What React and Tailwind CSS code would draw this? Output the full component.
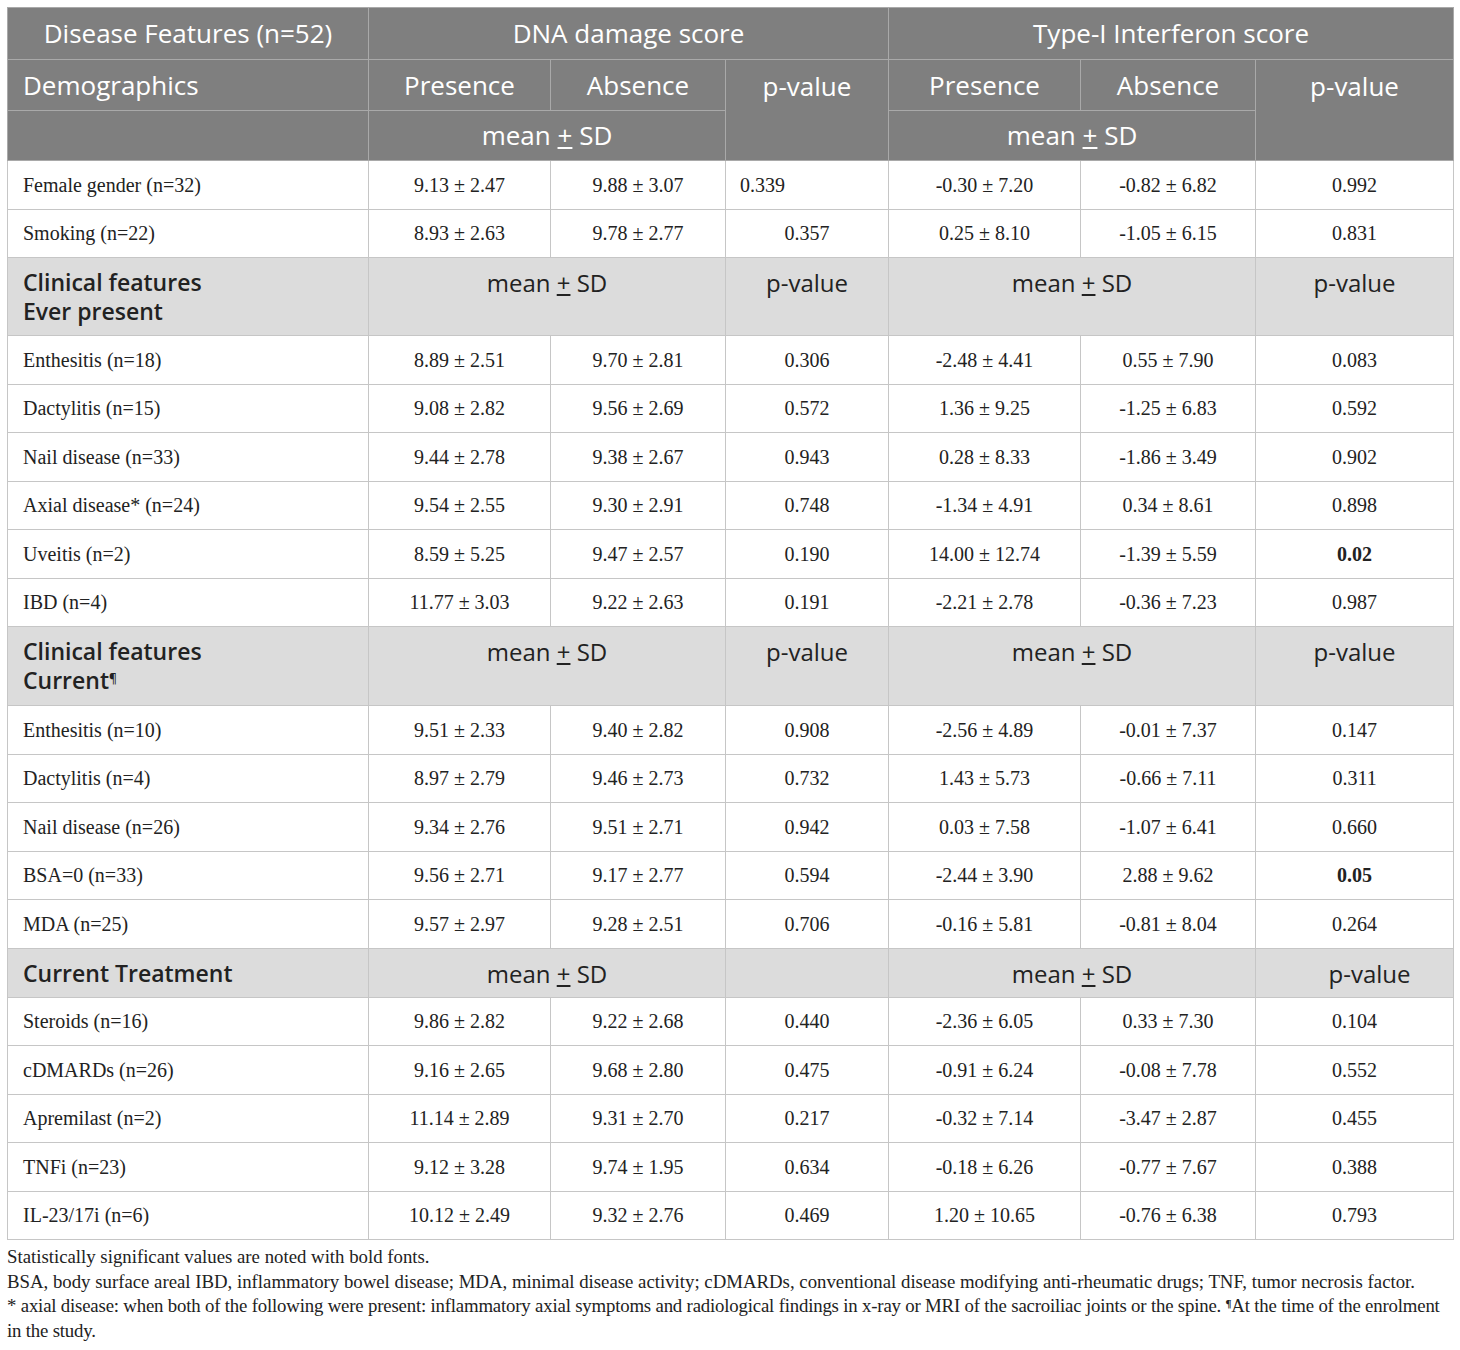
const dataA = [
  ["Female gender (n=32)", "9.13 ± 2.47", "9.88 ± 3.07", "0.339", "-0.30 ± 7.20", "-0.82 ± 6.82", "0.992", "left"],
  ["Smoking (n=22)", "8.93 ± 2.63", "9.78 ± 2.77", "0.357", "0.25 ± 8.10", "-1.05 ± 6.15", "0.831"],
];

const dataB = [
  ["Enthesitis (n=18)", "8.89 ± 2.51", "9.70 ± 2.81", "0.306", "-2.48 ± 4.41", "0.55 ± 7.90", "0.083"],
  ["Dactylitis (n=15)", "9.08 ± 2.82", "9.56 ± 2.69", "0.572", "1.36 ± 9.25", "-1.25 ± 6.83", "0.592"],
  ["Nail disease (n=33)", "9.44 ± 2.78", "9.38 ± 2.67", "0.943", "0.28 ± 8.33", "-1.86 ± 3.49", "0.902"],
  ["Axial disease* (n=24)", "9.54 ± 2.55", "9.30 ± 2.91", "0.748", "-1.34 ± 4.91", "0.34 ± 8.61", "0.898"],
  ["Uveitis (n=2)", "8.59 ± 5.25", "9.47 ± 2.57", "0.190", "14.00 ± 12.74", "-1.39 ± 5.59", "0.02", "bold"],
  ["IBD (n=4)", "11.77 ± 3.03", "9.22 ± 2.63", "0.191", "-2.21 ± 2.78", "-0.36 ± 7.23", "0.987"],
];

const dataC = [
  ["Enthesitis (n=10)", "9.51 ± 2.33", "9.40 ± 2.82", "0.908", "-2.56 ± 4.89", "-0.01 ± 7.37", "0.147"],
  ["Dactylitis (n=4)", "8.97 ± 2.79", "9.46 ± 2.73", "0.732", "1.43 ± 5.73", "-0.66 ± 7.11", "0.311"],
  ["Nail disease (n=26)", "9.34 ± 2.76", "9.51 ± 2.71", "0.942", "0.03 ± 7.58", "-1.07 ± 6.41", "0.660"],
  ["BSA=0 (n=33)", "9.56 ± 2.71", "9.17 ± 2.77", "0.594", "-2.44 ± 3.90", "2.88 ± 9.62", "0.05", "bold"],
  ["MDA (n=25)", "9.57 ± 2.97", "9.28 ± 2.51", "0.706", "-0.16 ± 5.81", "-0.81 ± 8.04", "0.264"],
];

const dataD = [
  ["Steroids (n=16)", "9.86 ± 2.82", "9.22 ± 2.68", "0.440", "-2.36 ± 6.05", "0.33 ± 7.30", "0.104"],
  ["cDMARDs (n=26)", "9.16 ± 2.65", "9.68 ± 2.80", "0.475", "-0.91 ± 6.24", "-0.08 ± 7.78", "0.552"],
  ["Apremilast (n=2)", "11.14 ± 2.89", "9.31 ± 2.70", "0.217", "-0.32 ± 7.14", "-3.47 ± 2.87", "0.455"],
  ["TNFi (n=23)", "9.12 ± 3.28", "9.74 ± 1.95", "0.634", "-0.18 ± 6.26", "-0.77 ± 7.67", "0.388"],
  ["IL-23/17i (n=6)", "10.12 ± 2.49", "9.32 ± 2.76", "0.469", "1.20 ± 10.65", "-0.76 ± 6.38", "0.793"],
];

const sans = "font-['Open_Sans',sans-serif]";
const hd = "border border-[#a9a9a9] text-white font-normal text-[26px]";
const td = "border border-[#c6c6c6] text-center align-middle";

function MeanSD() {
  return (
    <>
      mean <span className="underline underline-offset-2">+</span> SD
    </>
  );
}

function DataRows({ rows }) {
  return rows.map((r) => (
    <tr key={r[0]} className="h-[48.5px]">
      <td className="border border-[#c6c6c6] pl-[15px] text-left align-middle">{r[0]}</td>
      <td className={td}>{r[1]}</td>
      <td className={td}>{r[2]}</td>
      <td className={r[7] === "left" ? "border border-[#c6c6c6] pl-[14px] text-left align-middle" : td}>{r[3]}</td>
      <td className={td}>{r[4]}</td>
      <td className={td}>{r[5]}</td>
      <td className={r[7] === "bold" ? td + " font-bold" : td}>{r[6]}</td>
    </tr>
  ));
}

function Section({ label, h, pval = true, lastShift = false }) {
  const cell = `border border-[#c6c6c6] ${sans} text-[24px] text-[#222] align-top pt-[7px] text-center`;
  return (
    <tr className={`bg-[#dcdcdc] ${h}`}>
      <td className={`border border-[#c6c6c6] ${sans} text-[23px] font-semibold text-[#222] align-top pt-[10px] pl-[15px] leading-[29px] text-left`}>
        {label}
      </td>
      <td colSpan={2} className={cell}>
        <MeanSD />
      </td>
      <td className={cell}>{pval ? "p-value" : ""}</td>
      <td colSpan={2} className={cell}>
        <MeanSD />
      </td>
      <td className={lastShift ? cell + " pl-[30px]" : cell}>p-value</td>
    </tr>
  );
}

export default function App() {
  return (
    <div className="bg-white w-[1460px] min-h-[1350px] pt-[7px] pl-[7px]">
      <table className="table-fixed border-collapse w-[1446px] font-['Liberation_Serif',serif] text-[20px] text-[#222]">
        <colgroup>
          <col className="w-[361px]" />
          <col className="w-[182px]" />
          <col className="w-[175px]" />
          <col className="w-[163px]" />
          <col className="w-[192px]" />
          <col className="w-[175px]" />
          <col className="w-[198px]" />
        </colgroup>
        <thead className={`bg-[#7f7f7f] ${sans}`}>
          <tr className="h-[52px]">
            <th className={hd}>Disease Features (n=52)</th>
            <th colSpan={3} className={hd}>DNA damage score</th>
            <th colSpan={3} className={hd}>Type-I Interferon score</th>
          </tr>
          <tr className="h-[51px]">
            <th className={`${hd} text-left pl-[15px]`}>Demographics</th>
            <th className={hd}>Presence</th>
            <th className={hd}>Absence</th>
            <th rowSpan={2} className={`${hd} align-top pt-[7px]`}>p-value</th>
            <th className={hd}>Presence</th>
            <th className={hd}>Absence</th>
            <th rowSpan={2} className={`${hd} align-top pt-[7px]`}>p-value</th>
          </tr>
          <tr className="h-[50px]">
            <th className={hd}></th>
            <th colSpan={2} className={hd}>
              <MeanSD />
            </th>
            <th colSpan={2} className={hd}>
              <MeanSD />
            </th>
          </tr>
        </thead>
        <tbody>
          <DataRows rows={dataA} />
          <Section
            h="h-[78px]"
            label={
              <>
                Clinical features
                <br />
                Ever present
              </>
            }
          />
          <DataRows rows={dataB} />
          <Section
            h="h-[79px]"
            label={
              <>
                Clinical features
                <br />
                Current<sup className="text-[12px] leading-none">¶</sup>
              </>
            }
          />
          <DataRows rows={dataC} />
          <Section h="h-[49px]" label="Current Treatment" pval={false} lastShift />
          <DataRows rows={dataD} />
        </tbody>
      </table>
      <div className="mt-[5px] font-['Liberation_Serif',serif] text-[18.8px] leading-[24.5px] text-[#222]">
        <p>Statistically significant values are noted with bold fonts.</p>
        <p>
          BSA, body surface areal IBD, inflammatory bowel disease; MDA, minimal disease activity; cDMARDs, conventional
          disease modifying anti-rheumatic drugs; TNF, tumor necrosis factor.
        </p>
        <p className="tracking-[-0.18px]">
          <span className="whitespace-nowrap">
            * axial disease: when both of the following were present: inflammatory axial symptoms and radiological
            findings in x-ray or MRI of the sacroiliac joints or the spine.{" "}
            <sup className="font-bold text-[11px] leading-none">¶</sup>At the time of the enrolment
          </span>
          <br />
          in the study.
        </p>
      </div>
    </div>
  );
}
